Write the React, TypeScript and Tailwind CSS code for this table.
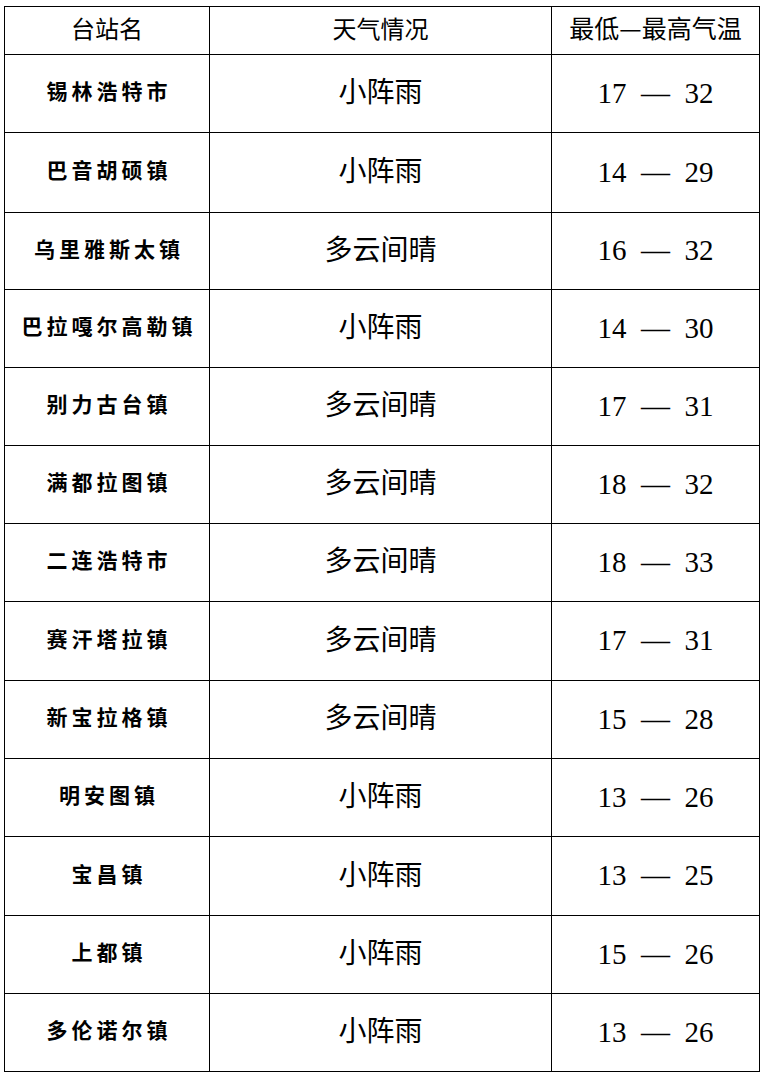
const rows = [
  { name: '锡林浩特市', weather: '小阵雨', lo: 17, hi: 32, h: 'h-[78px]' },
  { name: '巴音胡硕镇', weather: '小阵雨', lo: 14, hi: 29, h: 'h-[80px]' },
  { name: '乌里雅斯太镇', weather: '多云间晴', lo: 16, hi: 32, h: 'h-[77px]' },
  { name: '巴拉嘎尔高勒镇', weather: '小阵雨', lo: 14, hi: 30, h: 'h-[78px]' },
  { name: '别力古台镇', weather: '多云间晴', lo: 17, hi: 31, h: 'h-[78px]' },
  { name: '满都拉图镇', weather: '多云间晴', lo: 18, hi: 32, h: 'h-[78px]' },
  { name: '二连浩特市', weather: '多云间晴', lo: 18, hi: 33, h: 'h-[78px]' },
  { name: '赛汗塔拉镇', weather: '多云间晴', lo: 17, hi: 31, h: 'h-[79px]' },
  { name: '新宝拉格镇', weather: '多云间晴', lo: 15, hi: 28, h: 'h-[78px]' },
  { name: '明安图镇', weather: '小阵雨', lo: 13, hi: 26, h: 'h-[78px]' },
  { name: '宝昌镇', weather: '小阵雨', lo: 13, hi: 25, h: 'h-[79px]' },
  { name: '上都镇', weather: '小阵雨', lo: 15, hi: 26, h: 'h-[78px]' },
  { name: '多伦诺尔镇', weather: '小阵雨', lo: 13, hi: 26, h: 'h-[78px]' },
];

const cjk = "font-['Noto_Sans_CJK_SC','Noto_Sans',sans-serif]";

export default function App() {
  return (
    <div className="w-[761px] h-[1074px] bg-white pl-[4px] pt-[6px] text-black">
      <div className="grid w-[756px] grid-cols-[205px_342px_208px] border-l border-t border-black">
        {/* header */}
        <div className={`h-[48px] border-r border-b border-black flex items-center justify-center pb-[5px] text-[24px] ${cjk}`}>台站名</div>
        <div className={`h-[48px] border-r border-b border-black flex items-center justify-center pb-[5px] text-[24px] ${cjk}`}>天气情况</div>
        <div className={`h-[48px] border-r border-b border-black flex items-center justify-center pb-[5px] text-[25px] ${cjk}`}>最低—最高气温</div>

        {rows.map((r) => (
          <div key={r.name} className="contents">
            <div className={`${r.h} border-r border-b border-black flex items-center justify-center pl-[4px] pb-[5px] text-[21px] font-bold tracking-[4px] ${cjk}`}>
              {r.name}
            </div>
            <div className={`${r.h} border-r border-b border-black flex items-center justify-center pb-[7px] text-[28px] ${cjk}`}>
              {r.weather}
            </div>
            <div className={`${r.h} border-r border-b border-black flex items-center justify-center whitespace-pre text-[29px] font-['Liberation_Serif','Times_New_Roman',serif]`}>
              {`${r.lo}  —  ${r.hi}`}
            </div>
          </div>
        ))}
      </div>
    </div>
  );
}
